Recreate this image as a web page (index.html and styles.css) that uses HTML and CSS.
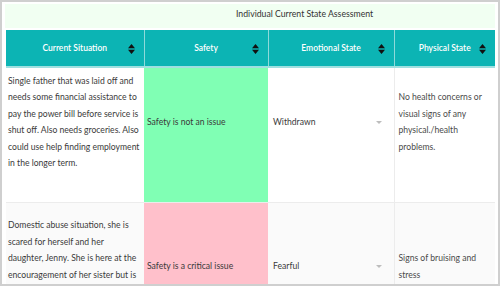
FILE: index.html
```html
<!DOCTYPE html>
<html>
<head>
<meta charset="utf-8">
<link rel="stylesheet" href="styles.css">
</head>
<body>
<div class="panel">
  <div class="title">Individual Current State Assessment</div>
  <table class="grid">
    <colgroup>
      <col class="c1"><col class="c2"><col class="c3"><col class="c4">
    </colgroup>
    <thead>
      <tr>
        <th>Current Situation<svg class="sort" viewBox="0 0 7 10"><path d="M3.5 0 L7 4.2 H0 Z M0 5.8 H7 L3.5 10 Z"/></svg></th>
        <th>Safety<svg class="sort" viewBox="0 0 7 10"><path d="M3.5 0 L7 4.2 H0 Z M0 5.8 H7 L3.5 10 Z"/></svg></th>
        <th>Emotional State<svg class="sort" viewBox="0 0 7 10"><path d="M3.5 0 L7 4.2 H0 Z M0 5.8 H7 L3.5 10 Z"/></svg></th>
        <th>Physical State<svg class="sort" viewBox="0 0 7 10"><path d="M3.5 0 L7 4.2 H0 Z M0 5.8 H7 L3.5 10 Z"/></svg></th>
      </tr>
    </thead>
    <tbody>
      <tr>
        <td class="sit">Single father that was laid off and needs some financial assistance to pay the power bill before service is shut off. Also needs groceries. Also could use help finding employment in the longer term.</td>
        <td class="safe">Safety is not an issue</td>
        <td><div class="select"><span>Withdrawn</span><i class="caret"></i></div></td>
        <td class="phys">No health concerns or visual signs of any physical./health problems.</td>
      </tr>
      <tr class="alt">
        <td class="sit">Domestic abuse situation, she is scared for herself and her daughter,&nbsp;Jenny. She is here at the encouragement of her sister but is worried that her husband will find out where they are.</td>
        <td class="critical">Safety is a critical issue</td>
        <td><div class="select"><span>Fearful</span><i class="caret"></i></div></td>
        <td class="phys">Signs of bruising and stress</td>
      </tr>
    </tbody>
  </table>
</div>
</body>
</html>
```

FILE: styles.css
```css
html, body {
  margin: 0;
  padding: 0;
  background: #ffffff;
  overflow: hidden;
}

body {
  width: 500px;
  height: 286px;
  font-family: "Lato", "Open Sans", sans-serif;
  color: #333333;
}

.panel {
  box-sizing: border-box;
  width: 500px;
  height: 286px;
  border: 2px solid #cfcfcf;
  padding: 2px 3px;
  background: #ffffff;
  overflow: hidden;
}

.title {
  background: #f1fff2;
  height: 24px;
  box-sizing: border-box;
  padding: 3px 0 0 231px;
  font-size: 8.7px;
  line-height: 13px;
  color: #333333;
  margin-bottom: 2px;
}

.grid {
  border-collapse: collapse;
  table-layout: fixed;
  width: 489px;
  margin: 0 1px;
}

.c1 { width: 138px; }
.c2 { width: 124px; }
.c3 { width: 126px; }
.c4 { width: 101px; }

.grid th {
  position: relative;
  height: 36px;
  padding: 0;
  background: #0cb4b4;
  color: #ffffff;
  font-weight: 600;
  font-size: 8.5px;
  text-align: center;
  border-bottom: 2px solid #9fe0e0;
  border-left: 1px solid #8fdada;
}

.grid th:first-child {
  border-left: none;
}

.sort {
  position: absolute;
  right: 9px;
  top: 14px;
  width: 7px;
  height: 10px;
  fill: #111111;
}

.grid td {
  padding: 5px 2px 31px;
  vertical-align: middle;
  font-size: 8.6px;
  line-height: 16.4px;
  color: #3a3a3a;
  border-bottom: 1px solid #ececec;
  background: #ffffff;
  text-align: left;
}

.grid tr.alt td {
  background: #fafafa;
  padding-top: 14px;
}

.grid td.phys {
  border-left: 1px solid #ececec;
  padding-left: 4px;
  color: #4a4a4a;
}

.grid td.safe,
.grid tr.alt td.safe {
  background: #80ffb4;
  padding-left: 3px;
}

.grid td.critical,
.grid tr.alt td.critical {
  background: #ffc0cb;
  padding-left: 3px;
}

.select {
  display: flex;
  align-items: center;
  justify-content: space-between;
  padding: 0 10px 0 3px;
}

.caret {
  display: block;
  width: 0;
  height: 0;
  border-left: 3px solid transparent;
  border-right: 3px solid transparent;
  border-top: 3px solid #bdbdbd;
}
```
